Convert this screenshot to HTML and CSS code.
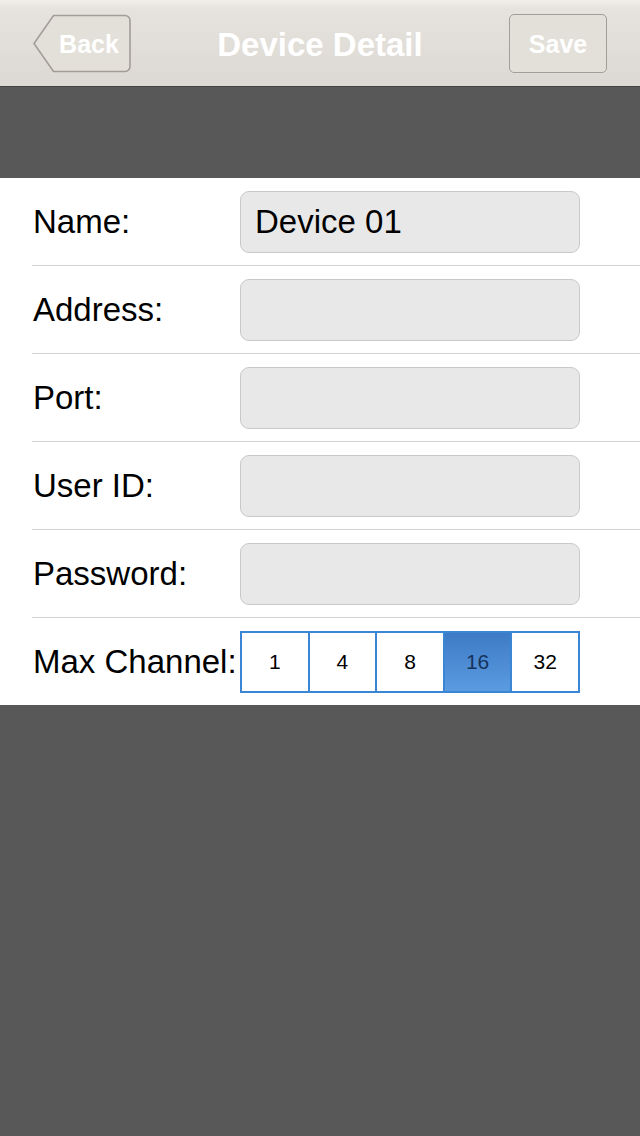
FILE: index.html
```html
<!DOCTYPE html>
<html lang="en">
<head>
    <meta charset="UTF-8">
    <title>Device Detail</title>
    <link rel="stylesheet" href="styles.css">
</head>
<body>

    <header class="navbar">
        <div class="nav_left">
            <span class="btn btn_back">
                <svg class="back_shape" width="98" height="59" viewBox="0 0 98 59">
                    <path d="M20.5 1.5 H92 a5 5 0 0 1 5 5 V52.5 a5 5 0 0 1 -5 5 H20.5 L1 29.5 Z" fill="#e3dfd9" stroke="#a29e97" stroke-width="1.6"/>
                </svg>
                <span class="btn_text">Back</span>
            </span>
        </div>
        <h1 class="title">Device Detail</h1>
        <div class="nav_right">
            <span class="btn btn_save"><span class="btn_text">Save</span></span>
        </div>
    </header>

    <div class="gap"></div>

    <section class="form">
        <div class="row">
            <label>Name:</label>
            <input type="text" class="field" value="Device 01">
        </div>
        <div class="row">
            <label>Address:</label>
            <input type="text" class="field">
        </div>
        <div class="row">
            <label>Port:</label>
            <input type="text" class="field">
        </div>
        <div class="row">
            <label>User ID:</label>
            <input type="text" class="field">
        </div>
        <div class="row">
            <label>Password:</label>
            <input type="password" class="field">
        </div>
        <div class="row last">
            <label>Max Channel:</label>
            <div class="segments">
                <span class="seg">1</span>
                <span class="seg">4</span>
                <span class="seg">8</span>
                <span class="seg on">16</span>
                <span class="seg">32</span>
            </div>
        </div>
    </section>

</body>
</html>
```

FILE: styles.css
```css
body {
    margin: 0;
    background: #585858;
    font-family: "Liberation Sans", Arial, sans-serif;
}
.navbar {
    height: 87px;
    box-sizing: border-box;
    padding: 14px 33px 0;
    display: grid;
    grid-template-columns: 1fr auto 1fr;
    align-items: start;
    background: linear-gradient(#f1efeb, #e6e3de 10%, #dcd8d2);
    border-bottom: 1px solid #434343;
}
.nav_right {
    display: flex;
    justify-content: flex-end;
}
.title {
    margin: 0;
    font-size: 33px;
    line-height: 61px;
    font-weight: bold;
    color: #fff;
}
.btn {
    position: relative;
    display: flex;
    align-items: center;
    justify-content: center;
    width: 98px;
    height: 59px;
    box-sizing: border-box;
    padding-top: 2px;
    font-size: 25px;
    font-weight: bold;
    color: #fff;
}
.btn_text {
    position: relative;
}
.btn_back {
    padding-left: 14px;
}
.back_shape {
    position: absolute;
    left: 0;
    top: 0;
}
.btn_save {
    border: 1.5px solid #a29e97;
    border-radius: 5px;
    background: #e3dfd9;
}
.gap {
    height: 91px;
}
.form {
    background: #fff;
}
.row {
    margin-left: 32px;
    height: 87px;
    border-bottom: 1px solid #d2d2d2;
    display: flex;
    align-items: center;
}
.row.last {
    border-bottom: none;
}
.row label {
    width: 208px;
    padding-left: 1px;
    box-sizing: border-box;
    font-size: 33px;
    color: #000;
}
.field {
    width: 340px;
    height: 62px;
    box-sizing: border-box;
    margin: 0;
    padding: 0 14px;
    border: 1px solid #c9c9c9;
    border-radius: 9px;
    background: #e8e8e8;
    font-family: inherit;
    font-size: 33px;
    color: #000;
    outline: none;
}
.segments {
    display: flex;
    width: 340px;
    height: 62px;
    box-sizing: border-box;
    border: 2px solid #3a85d4;
}
.seg {
    flex: 1;
    display: flex;
    align-items: center;
    justify-content: center;
    border-right: 2px solid #3a85d4;
    font-size: 21px;
    color: #000;
}
.seg:last-child {
    border-right: none;
}
.seg.on {
    background: linear-gradient(#3e7bc6, #5b9be0);
    color: #17335c;
}
```
